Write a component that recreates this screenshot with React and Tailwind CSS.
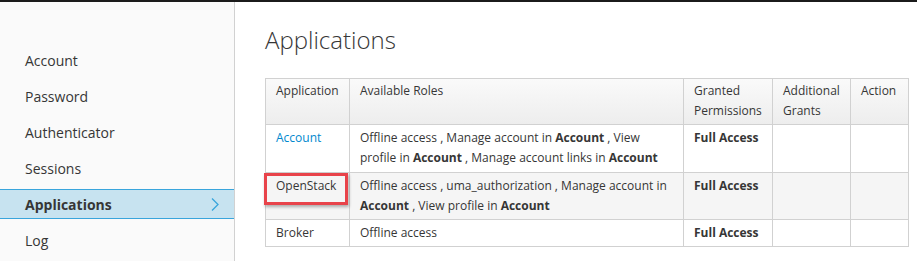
import React from 'react';

const navItems = ['Account', 'Password', 'Authenticator', 'Sessions', 'Applications', 'Log'];

function Chevron() {
  return (
    <svg width="8" height="13" viewBox="0 0 8 13" className="shrink-0">
      <polyline points="1,0.5 7,6.5 1,12.5" fill="none" stroke="#39a5dc" strokeWidth="1.3" />
    </svg>
  );
}

function Sidebar() {
  return (
    <nav className="w-[235px] shrink-0 bg-[#fafafa] border-r border-[#d1d1d1] pt-[43px] flex flex-col gap-[6px]">
      {navItems.map(item => {
        const active = item === 'Applications';
        return (
          <div
            key={item}
            className={`h-[30px] pl-[25px] pr-[15px] flex items-center justify-between border-y text-[14px] ${
              active ? 'bg-[#c7e3f0] border-[#39a5dc] font-bold' : 'border-transparent'
            }`}
          >
            <span>{item}</span>
            {active && <Chevron />}
          </div>
        );
      })}
    </nav>
  );
}

const B = ({ children }) => <strong className="font-bold">{children}</strong>;

const rows = [
  {
    app: 'Account',
    link: true,
    roles: (
      <>
        Offline access , Manage account in <B>Account</B> , View profile in <B>Account</B> , Manage account links in <B>Account</B>
      </>
    ),
  },
  {
    app: 'OpenStack',
    marked: true,
    striped: true,
    roles: (
      <>
        Offline access , uma_authorization , Manage account in <B>Account</B> , View profile in <B>Account</B>
      </>
    ),
  },
  { app: 'Broker', roles: <>Offline access</> },
];

function AppsTable() {
  const th = 'border border-[#d1d1d1] px-[10px] pt-[2px] pb-[3px] text-left align-top font-normal';
  return (
    <table className="border-collapse table-fixed w-[643px] text-[12px] leading-[20px]">
      <colgroup>
        <col className="w-[84px]" />
        <col className="w-[334px]" />
        <col className="w-[89px]" />
        <col className="w-[78px]" />
        <col className="w-[58px]" />
      </colgroup>
      <thead>
        <tr className="bg-gradient-to-b from-[#fafafa] to-[#ededed]">
          <th className={th}>Application</th>
          <th className={th}>Available Roles</th>
          <th className={th}>Granted Permissions</th>
          <th className={th}>Additional Grants</th>
          <th className={th}>Action</th>
        </tr>
      </thead>
      <tbody>
        {rows.map((row, i) => {
          const td = `border border-[#d1d1d1] px-[10px] pt-[3px] align-top ${i === 0 ? 'pb-[4px]' : 'pb-[3px]'}`;
          return (
            <tr key={row.app} className={row.striped ? 'bg-[#f5f5f5]' : 'bg-white'}>
              <td className={`${td} relative`}>
                {row.link ? <span className="text-[#0088ce]">{row.app}</span> : row.app}
                {row.marked && (
                  <div className="absolute left-[-2px] top-0 w-[84px] h-[32px] border-[3px] border-[#e8434a] shadow-[1px_2px_3px_rgba(0,0,0,0.3)]" />
                )}
              </td>
              <td className={td}>{row.roles}</td>
              <td className={`${td} font-bold`}>Full Access</td>
              <td className={td}></td>
              <td className={td}></td>
            </tr>
          );
        })}
      </tbody>
    </table>
  );
}

export default function App() {
  return (
    <div className="w-[917px] h-[261px] overflow-hidden bg-white text-[#363636] font-['Open_Sans',sans-serif] border-t-2 border-[#1b1b1b] flex">
      <Sidebar />
      <main className="pl-[30px] pt-[22px]">
        <h1 className="text-[24px] leading-[32px] font-light mb-[22px]">Applications</h1>
        <AppsTable />
      </main>
    </div>
  );
}
